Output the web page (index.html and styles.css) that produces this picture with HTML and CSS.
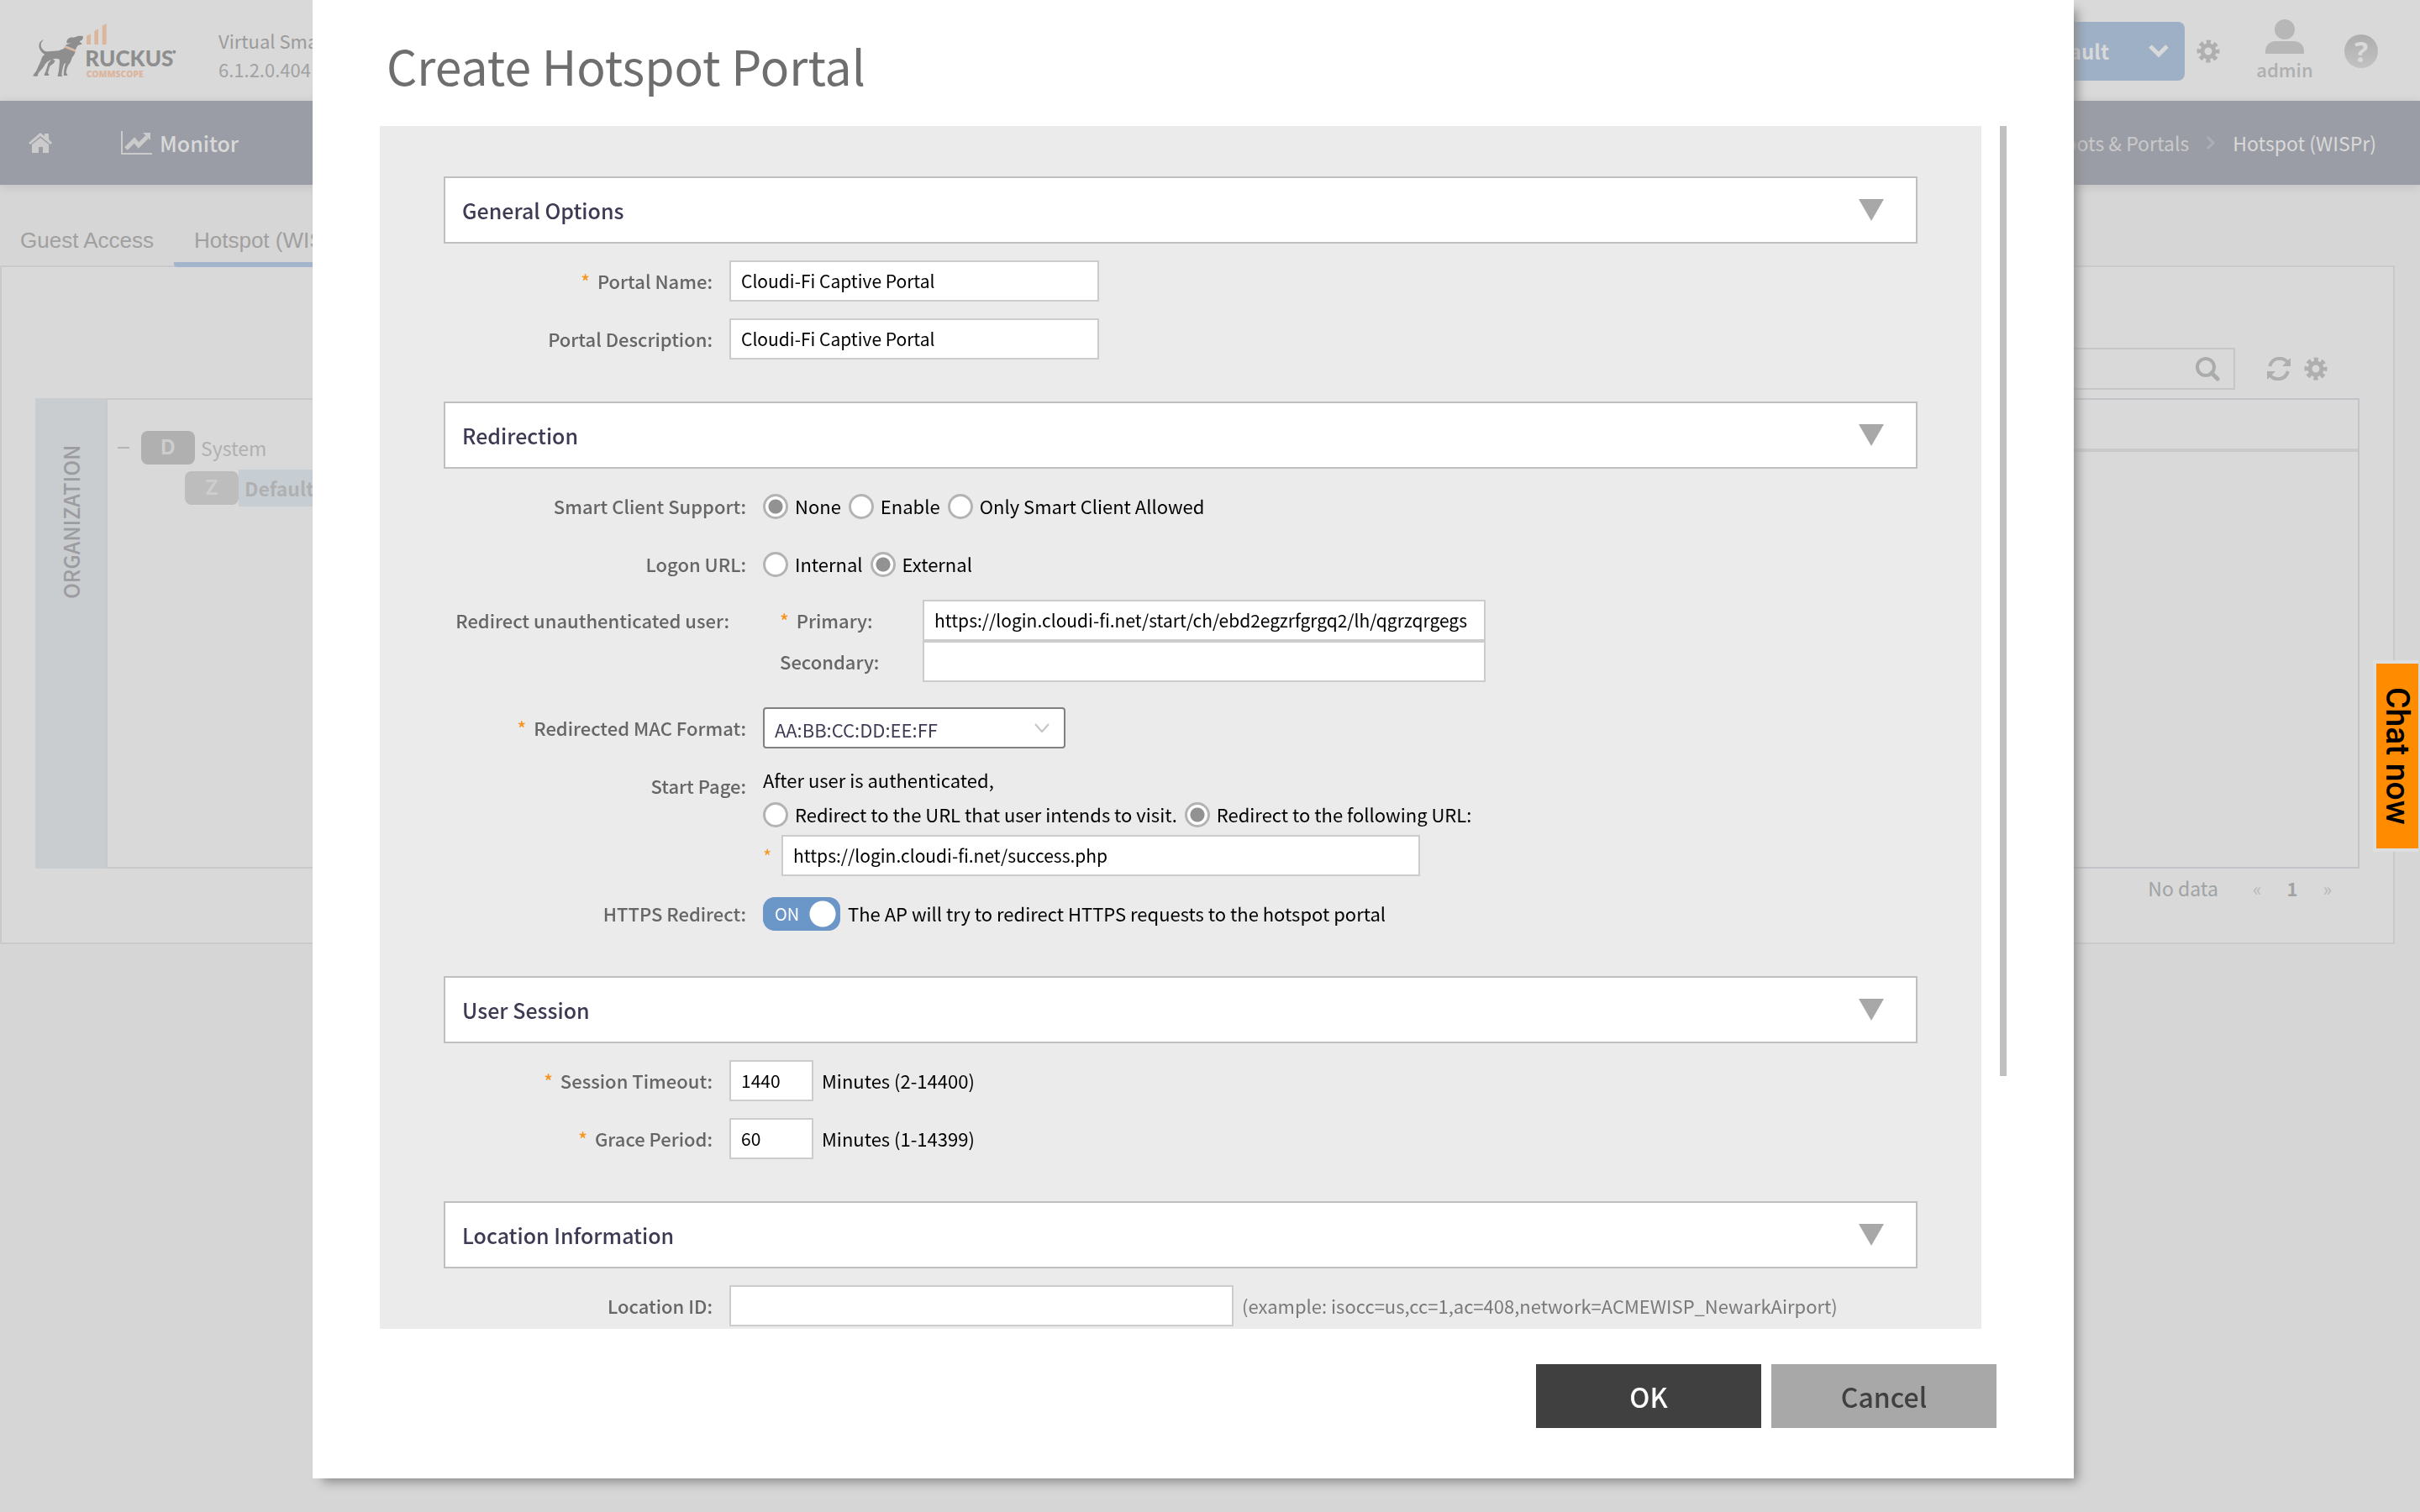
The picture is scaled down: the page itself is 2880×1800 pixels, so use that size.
FILE: index.html
```
<!DOCTYPE html>
<html lang="en">
<head>
    <meta charset="UTF-8">
    <title>Hotspot (WISPr)</title>
    <link rel="stylesheet" href="styles.css">
</head>
<body>
    <div class="page">
        <header class="topbar">
            <svg class="logo" viewBox="0 0 570 240" role="img" aria-label="Ruckus Commscope">
                <g fill="#8e8e8e">
                    <path d="M65 83 C54 93 54 103 60 113 C66 122 72 124 82 124 L120 121 L139 113 L141 106 L179 124 C177 133 173 140 167 146 C164 156 162 164 155 171 C150 180 147 190 146 200 L151 207 L150 210 L138 210 L137 204 C139 186 141 174 145 165 L139 168 C134 181 131 195 130 207 L133 213 L116 213 L117 206 C122 190 121 176 123 160 L122 152 C113 148 106 149 98 152 L107 157 C103 166 97 171 88 176 L81 200 L85 206 L84 210 L68 210 L69 204 C76 191 79 177 82 166 L94 153 C85 156 78 161 71 169 C67 181 54 191 46 203 L44 212 L28 212 L31 204 C42 194 44 180 50 170 C58 158 57 141 70 135 C58 127 48 114 49 102 C50 92 56 86 64 82 Z"/>
                    <path d="M148 87 C151 78 159 73 169 74 L181 72 C186 68 194 68 206 69 L207 74 L203 83 L194 87 L196 91 L203 95 L200 99 L189 101 C185 106 182 111 180 118 L143 103 C147 97 158 98 164 93 L170 86 C166 91 160 98 148 93 Z"/>
                    <circle cx="532" cy="125" r="6"/>
                </g>
                <path fill="#dcb59d" d="M142 104 L181 119 L179 125 L139 110 Z"/>
                <path fill="#dcb59d" d="M219 69 L234 61 V99 H219 Z M247 51 L261 43 V99 H247 Z M275 32 L290 24 V99 H275 Z"/>
                <text class="logo-name" x="214" y="177">RUCKUS</text>
                <text class="logo-sub" x="218" y="216">COMMSCOPE</text>
            </svg>
            <div class="product">
                <p class="product-name">Virtual SmartZone</p>
                <p>6.1.2.0.404</p>
            </div>
            <div class="topbar-right">
                <button class="domain" type="button">
                    Default
                    <svg width="26" height="18" viewBox="0 0 26 18"><path d="M3 3 L13 13 L23 3" fill="none" stroke="#d9d9d9" stroke-width="5"/></svg>
                </button>
                <svg class="gear" viewBox="0 0 28 28"><use href="#gear"/></svg>
                <a class="user" href="#">
                    <svg width="46" height="42" viewBox="0 0 46 42" fill="#b7b7b7"><circle cx="23" cy="12" r="12"/><path d="M0 41 V38 C0 31 5 26 12 26 H34 C41 26 46 31 46 38 V41 Z"/></svg>
                    admin
                </a>
                <a class="help" href="#" aria-label="Help">?</a>
            </div>
        </header>
        <nav class="navbar">
            <a class="home" href="#" aria-label="Home">
                <svg width="28" height="24" viewBox="0 0 28 24" fill="#cbcbcb"><path d="M0 12 L14 0 L19 4 V1 H24 V8 L28 12 L26 14 L14 4 L2 14 Z"/><path d="M4 14 L14 6 L24 14 V24 H17 V17 H12 V24 H4 Z"/></svg>
            </a>
            <a class="monitor" href="#">
                <svg width="38" height="30" viewBox="0 0 38 30"><path d="M1 1 V28 H37" fill="none" stroke="#cbcbcb" stroke-width="2"/><path d="M6 22 L16 12 L21 18 L31 8" fill="none" stroke="#cbcbcb" stroke-width="5"/><path d="M26 3 H35 V12 Z" fill="#cbcbcb"/></svg>
                Monitor
            </a>
            <div class="crumbs">
                <a href="#">Hotspots &amp; Portals</a>
                <svg width="12" height="18" viewBox="0 0 12 18"><path d="M2 2 L9 9 L2 16" fill="none" stroke="#adaeb4" stroke-width="3"/></svg>
                <a class="crumb-current" href="#">Hotspot (WISPr)</a>
            </div>
        </nav>
        <main class="main">
            <div class="tabs">
                <a class="tab" href="#">Guest Access</a>
                <a class="tab tab-active" href="#">Hotspot (WISPr)</a>
            </div>
            <section class="panel">
                <div class="toolbar">
                    <label class="search">
                        <input type="search" aria-label="Search">
                        <svg width="30" height="30" viewBox="0 0 30 30" fill="none" stroke="#aaacab"><circle cx="13" cy="13" r="10" stroke-width="4"/><path d="M20 20 L27 27" stroke-width="5" stroke-linecap="round"/></svg>
                    </label>
                    <svg class="refresh" viewBox="0 0 28 28"><path d="M3 11 C7 -1 20 0 25 7" fill="none" stroke="#afafaf" stroke-width="4"/><path d="M28 1 V11 H18 Z" fill="#afafaf"/><path d="M25 17 C21 29 8 28 3 21" fill="none" stroke="#afafaf" stroke-width="4"/><path d="M0 27 V17 H10 Z" fill="#afafaf"/></svg>
                    <svg class="gear" viewBox="0 0 28 28">
                        <g id="gear" fill="none" stroke="#afafaf"><circle cx="14" cy="14" r="7" stroke-width="5"/><circle cx="14" cy="14" r="11" stroke-width="5" stroke-dasharray="5 3.64" stroke-dashoffset="2.5"/></g>
                    </svg>
                </div>
                <div class="content">
                    <h2 class="org">ORGANIZATION</h2>
                    <div class="tree">
                        <div class="node">
                            <span class="minus"></span>
                            <span class="badge">D</span>
                            <span class="node-name">System</span>
                        </div>
                        <div class="node node-child">
                            <span class="badge badge-zone">Z</span>
                            <span class="node-name node-selected">Default Zone</span>
                        </div>
                    </div>
                    <div class="grid">
                        <div class="grid-head"></div>
                    </div>
                </div>
                <div class="pager">
                    <span class="no-data">No data</span>
                    <a class="step" href="#">«</a>
                    <b>1</b>
                    <a class="step" href="#">»</a>
                </div>
            </section>
        </main>
    </div>

    <div class="overlay">
        <form class="modal" role="dialog" aria-labelledby="title">
            <h1 class="title" id="title">Create Hotspot Portal</h1>
            <div class="scroller">
                <div class="body">
                    <section class="section">
                        <h3>General Options <span class="arrow"></span></h3>
                        <div class="row">
                            <label class="label required" for="name">Portal Name:</label>
                            <input class="text w-name" id="name" type="text" value="Cloudi-Fi Captive Portal">
                        </div>
                        <div class="row">
                            <label class="label" for="desc">Portal Description:</label>
                            <input class="text w-name" id="desc" type="text" value="Cloudi-Fi Captive Portal">
                        </div>
                    </section>

                    <section class="section section-wide">
                        <h3>Redirection <span class="arrow"></span></h3>
                        <div class="row">
                            <span class="label">Smart Client Support:</span>
                            <div class="radios">
                                <label><input type="radio" name="smart" checked>None</label>
                                <label><input type="radio" name="smart">Enable</label>
                                <label><input type="radio" name="smart">Only Smart Client Allowed</label>
                            </div>
                        </div>
                        <div class="row">
                            <span class="label">Logon URL:</span>
                            <div class="radios">
                                <label><input type="radio" name="logon">Internal</label>
                                <label><input type="radio" name="logon" checked>External</label>
                            </div>
                        </div>
                        <div class="row row-urls">
                            <span class="label">Redirect unauthenticated user:</span>
                            <div class="urls">
                                <label class="required" for="primary">Primary:</label>
                                <input class="text w-url" id="primary" type="text" value="https://login.cloudi-fi.net/start/ch/ebd2egzrfgrgq2/lh/qgrzqrgegs">
                                <label for="secondary">Secondary:</label>
                                <input class="text w-url" id="secondary" type="text">
                            </div>
                        </div>
                        <div class="row row-mac">
                            <label class="label required" for="mac">Redirected MAC Format:</label>
                            <div class="select">
                                <select id="mac">
                                    <option>AA:BB:CC:DD:EE:FF</option>
                                </select>
                                <svg width="18" height="12" viewBox="0 0 18 12"><path d="M1 1 L9 10 L17 1" fill="none" stroke="#c4c4c4" stroke-width="2"/></svg>
                            </div>
                        </div>
                        <div class="row">
                            <span class="label">Start Page:</span>
                            <div class="start">
                                <p>After user is authenticated,</p>
                                <div class="radios">
                                    <label><input type="radio" name="start">Redirect to the URL that user intends to visit.</label>
                                    <label><input type="radio" name="start" checked>Redirect to the following URL:</label>
                                </div>
                                <div class="start-url required">
                                    <input class="text w-start" type="text" aria-label="Start page URL" value="https://login.cloudi-fi.net/success.php">
                                </div>
                            </div>
                        </div>
                        <div class="row">
                            <label class="label" for="https">HTTPS Redirect:</label>
                            <span class="switch"><input id="https" type="checkbox" checked><span>ON</span></span>
                            <span class="switch-text">The AP will try to redirect HTTPS requests to the hotspot portal</span>
                        </div>
                    </section>

                    <section class="section">
                        <h3>User Session <span class="arrow"></span></h3>
                        <div class="row">
                            <label class="label required" for="timeout">Session Timeout:</label>
                            <input class="text w-num" id="timeout" type="text" value="1440">
                            <span class="unit">Minutes (2-14400)</span>
                        </div>
                        <div class="row">
                            <label class="label required" for="grace">Grace Period:</label>
                            <input class="text w-num" id="grace" type="text" value="60">
                            <span class="unit">Minutes (1-14399)</span>
                        </div>
                    </section>

                    <section class="section">
                        <h3>Location Information <span class="arrow"></span></h3>
                        <div class="row">
                            <label class="label" for="location">Location ID:</label>
                            <input class="text w-location" id="location" type="text">
                            <span class="hint">(example: isocc=us,cc=1,ac=408,network=ACMEWISP_NewarkAirport)</span>
                        </div>
                    </section>
                </div>
                <div class="scrollbar"></div>
            </div>
            <div class="buttons">
                <button class="btn btn-ok" type="button">OK</button>
                <button class="btn" type="button">Cancel</button>
            </div>
        </form>
    </div>

    <button class="chat" type="button">Chat now</button>
</body>
</html>
```

FILE: styles.css
```
* {
    margin: 0;
    padding: 0;
    box-sizing: border-box;
}
body {
    font-family: "Noto Sans CJK SC", "Noto Sans", sans-serif;
    font-size: 22px;
    line-height: 34px;
    color: #000;
    background-color: #d6d6d6;
    overflow: hidden;
}
input, select, button {
    font: inherit;
    color: inherit;
    border: none;
    outline: none;
}
a {
    color: inherit;
    text-decoration: none;
}
svg {
    flex: none;
}

/* page behind the dialog */
.page {
    min-height: 100vh;
    color: #a2a2a2;
}
.topbar {
    display: flex;
    align-items: center;
    height: 120px;
    padding: 0 50px 0 30px;
    background-color: #d9d9d9;
}
.logo {
    width: 190px;
    height: 80px;
}
.logo-name {
    font: 900 78px Lato, sans-serif;
    fill: #8e8e8e;
}
.logo-sub {
    font: 800 31px "Open Sans", sans-serif;
    fill: #dcb59d;
}
.product {
    margin: 10px 0 0 40px;
}
.product-name {
    color: #9b9b9b;
}
.topbar-right {
    display: flex;
    align-items: center;
    height: 120px;
    padding-top: 2px;
    margin-left: auto;
}
.domain {
    display: flex;
    align-items: center;
    justify-content: flex-end;
    gap: 46px;
    width: 300px;
    height: 70px;
    padding-right: 18px;
    border-radius: 8px;
    background-color: #9eb0c6;
    color: #d9d9d9;
    font-size: 24px;
    font-weight: 700;
}
.gear, .refresh {
    width: 28px;
    height: 28px;
}
.topbar .gear {
    margin-left: 14px;
}
.user {
    display: flex;
    flex-direction: column;
    align-items: center;
    width: 66px;
    margin: 0 38px 0 44px;
    color: #afafaf;
    font-weight: 500;
}
.help {
    width: 40px;
    height: 40px;
    border-radius: 50%;
    background: linear-gradient(#adadad, #c2c2c2);
    color: #d9d9d9;
    font: 700 34px/40px "Open Sans", sans-serif;
    text-align: center;
}
.navbar {
    display: flex;
    align-items: center;
    height: 100px;
    padding: 0 52px 0 34px;
    background-color: #9b9da6;
    box-shadow: 0 2px 12px rgba(0, 0, 0, 0.1);
    color: #d9d9d9;
    font-size: 23px;
}
.home {
    display: flex;
}
.monitor {
    display: flex;
    align-items: center;
    gap: 8px;
    margin-left: 82px;
    font-size: 25px;
    font-weight: 500;
}
.crumbs {
    display: flex;
    align-items: center;
    gap: 20px;
    margin-left: auto;
    color: #c9c9c9;
}
.crumb-current {
    color: #d9d9d9;
}
.tabs {
    display: flex;
    height: 98px;
    padding-top: 32px;
    font: 26px/68px "Liberation Sans", Arial, sans-serif;
    color: #a0a0a0;
}
.tab {
    height: 66px;
    padding: 0 24px;
}
.tab-active {
    border-bottom: 6px solid #a3b5cd;
    border-radius: 4px;
}
.panel {
    margin: -2px 30px 0 0;
    padding: 0 40px 42px;
    border: 2px solid #c9c9c9;
    background-color: #d9d9d9;
}
.toolbar {
    display: flex;
    align-items: center;
    justify-content: flex-end;
    gap: 16px;
    padding: 96px 38px 10px 0;
}
.search {
    display: flex;
    align-items: center;
    width: 500px;
    height: 50px;
    margin-right: 22px;
    padding-right: 16px;
    border: 2px solid #c6c6c6;
}
.search input {
    flex: 1;
    height: 40px;
    background: none;
}
.content {
    display: flex;
    height: 560px;
}
.org {
    writing-mode: vertical-rl;
    transform: rotate(180deg);
    width: 84px;
    padding-bottom: 56px;
    line-height: 84px;
    text-align: right;
    font-size: 25px;
    font-weight: 500;
    color: #9c9ca0;
    background-color: #c9cdd0;
}
.tree {
    width: 600px;
    padding: 33px 0 0 12px;
    border: 2px solid #c9c9c9;
    color: #b0b0b0;
    font-size: 23px;
}
.node {
    display: flex;
    align-items: center;
    height: 48px;
}
.node-child {
    padding-left: 80px;
}
.minus {
    width: 14px;
    height: 2px;
    margin-right: 14px;
    background-color: #b5b5b5;
}
.badge {
    width: 64px;
    height: 40px;
    border-radius: 8px;
    background-color: #b0b0b0;
    color: #cdcdcd;
    font: 700 24px/40px Inter, sans-serif;
    text-align: center;
}
.badge-zone {
    background-color: #bdbdbd;
}
.node-name {
    padding: 0 7px;
    line-height: 44px;
}
.node-selected {
    background-color: #c6ced4;
    font-weight: 700;
}
.grid {
    flex: 1;
    margin-left: 20px;
    border: 2px solid #c3c3ca;
}
.grid-head {
    height: 62px;
    border-bottom: 4px solid #c9c9c9;
}
.pager {
    display: flex;
    align-items: center;
    justify-content: flex-end;
    height: 46px;
    padding-right: 33px;
    color: #a0a3a5;
    gap: 30px;
}
.no-data {
    margin-right: 11px;
    font-size: 23px;
}
.step {
    color: #b8b8b8;
}

/* dialog */
.overlay {
    position: fixed;
    inset: 0;
    padding: 0 412px 40px 372px;
}
.modal {
    display: flex;
    flex-direction: column;
    height: 100%;
    background-color: #fff;
    box-shadow: 8px 8px 12px -4px #888;
}
.title {
    height: 150px;
    padding-left: 88px;
    font-size: 57px;
    font-weight: 400;
    line-height: 154px;
    color: #6e6e6e;
}
.scroller {
    display: flex;
    flex: 1;
    gap: 22px;
    min-height: 0;
    padding: 0 80px;
}
.body {
    flex: 1;
    padding: 60px 76px 0;
    background-color: #ebebeb;
    overflow: hidden;
}
.scrollbar {
    width: 8px;
    height: 79%;
    background-color: #c0c0c0;
}
.section {
    margin-bottom: 50px;
}
.section h3 {
    display: flex;
    align-items: center;
    justify-content: space-between;
    height: 80px;
    padding: 0 38px 0 20px;
    border: 2px solid #bfbfbf;
    background-color: #fff;
    font-size: 25px;
    font-weight: 500;
    color: #3d3a53;
}
.arrow {
    border: 15px solid transparent;
    border-top: 26px solid #a8a8a8;
    border-bottom: none;
}
.row {
    display: flex;
    margin-top: 20px;
    line-height: 49px;
}
.label {
    width: 320px;
    margin-right: 20px;
    text-align: right;
}
.section-wide .label {
    width: 360px;
}
.label, .urls label {
    flex: none;
    font-weight: 500;
    color: #666;
}
.required::before {
    content: "*";
    margin-right: 9px;
    color: #f7931e;
}
.text {
    height: 49px;
    padding: 0 12px;
    border: 2px solid #ccc;
    background-color: #fff;
    font-size: 21px;
}
.w-name {
    width: 440px;
}
.w-num {
    width: 100px;
}
.w-url {
    width: 670px;
}
.w-start {
    width: 760px;
}
.w-location {
    width: 600px;
}
.unit {
    margin-left: 10px;
}
.hint {
    margin-left: 10px;
    color: #7a7a7a;
}
.radios {
    display: flex;
    gap: 9px;
}
.radios label {
    display: flex;
    align-items: center;
    gap: 8px;
}
.radios input {
    appearance: none;
    width: 30px;
    height: 30px;
    border: 3px solid #b3b3b3;
    border-radius: 50%;
    background-color: #fff;
}
.radios input:checked {
    background: radial-gradient(circle, #929292 8px, #fff 9px);
}
.section-wide .row-urls .label {
    width: 340px;
    margin-right: 60px;
}
.row-urls {
    margin-top: 18px;
}
.urls {
    display: grid;
    grid-template-columns: 170px auto;
}
.row-mac {
    margin-top: 30px;
}
.select {
    position: relative;
}
.select select {
    appearance: none;
    display: block;
    width: 360px;
    height: 49px;
    padding: 0 12px;
    border: 2px solid #808080;
    border-radius: 4px;
    background-color: #fff;
    color: #3f3c55;
}
.select svg {
    position: absolute;
    right: 19px;
    top: 19px;
}
.start p {
    line-height: 34px;
}
.start-url {
    display: flex;
}
.start-url.required::before {
    width: 13px;
}
.switch {
    position: relative;
    display: flex;
    align-items: center;
    margin-right: 9px;
}
.switch input {
    appearance: none;
    width: 92px;
    height: 40px;
    border-radius: 14px;
    background: radial-gradient(circle at 71px 20px, #fff 15px, transparent 16px) #6b96c8;
}
.switch span {
    position: absolute;
    left: 14px;
    font-size: 20px;
    color: #fff;
}
.buttons {
    display: flex;
    justify-content: flex-end;
    gap: 12px;
    padding: 42px 92px 60px;
}
.btn {
    width: 268px;
    height: 76px;
    background-color: #a8a8a8;
    color: #404040;
    font-size: 32px;
    font-weight: 500;
}
.btn-ok {
    background-color: #404040;
    color: #fff;
}

/* chat tab on the window edge */
.chat {
    position: fixed;
    top: 786px;
    right: 2px;
    width: 54px;
    height: 228px;
    border: 4px solid #dedede;
    border-right: none;
    background-color: #ff8c00;
    color: #000;
    font: 500 39px/50px Roboto, sans-serif;
    writing-mode: vertical-rl;
}
```
